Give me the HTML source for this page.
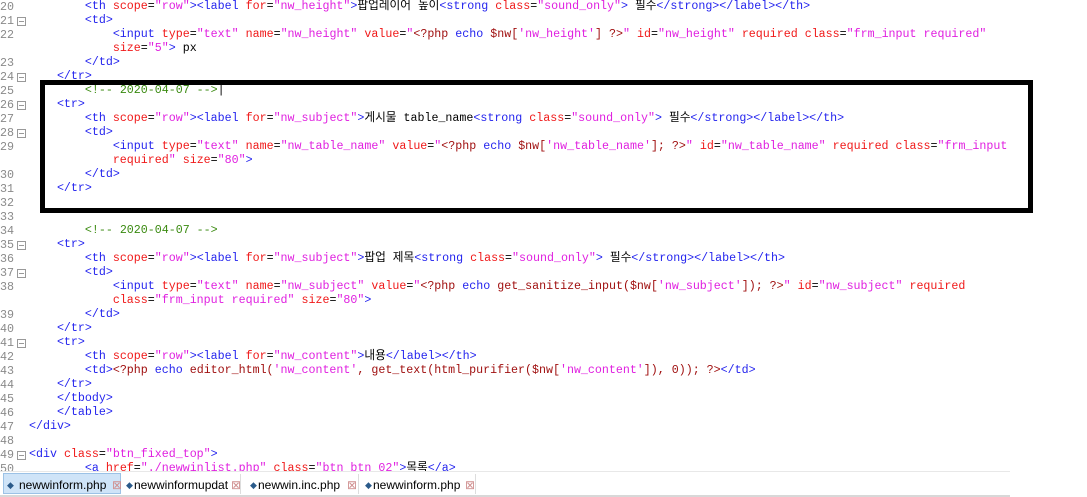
<!DOCTYPE html>
<html><head><meta charset="utf-8"><style>
body{margin:0;width:1087px;height:497px;overflow:hidden;background:#fff;position:relative;font-family:"Liberation Mono","Noto Sans CJK KR",monospace;}
.ln{position:absolute;left:0;width:14px;text-align:right;font-size:11.7px;color:#8a8a8a;line-height:14px}
.fold{position:absolute;left:17px;width:7px;height:7px;border:1px solid #999;}
.fold:after{content:"";position:absolute;left:1px;right:1px;top:3px;height:1px;background:#999}
.code{position:absolute;left:29px;top:0;font-size:11.65px;line-height:14px;white-space:pre;color:#000}
.t{color:#2424ee}.a{color:#f01818}.v{color:#e020e0}.c{color:#3a8a10}.p{color:#a01010}.k{color:#2424ee}
.box{position:absolute;left:40px;top:80px;width:983px;height:123px;border:5px solid #000}
.tabs{position:absolute;left:0;top:471px;width:1010px;height:24px;border-top:1px solid #e8e8e8;background:#fff;font-family:"Liberation Sans",sans-serif;font-size:12px}
.bot{position:absolute;left:0;top:495px;width:1010px;height:2px;background:#d8d8d8}
.tab{position:absolute;top:2px;height:20px;line-height:22px;color:#000;white-space:nowrap}
.x{position:absolute;top:0;color:#d09090;font-size:12px}
.dia{position:absolute;top:0;color:#2a5a8a;font-size:9px}
.sep{position:absolute;top:2px;width:1px;height:20px;background:#ddd}
</style></head><body>
<div class="box"></div>
<div class="code"><span class="t">        &lt;th </span><span class="a">scope</span>=<span class="v">"row"</span><span class="t">&gt;&lt;label </span><span class="a">for</span>=<span class="v">"nw_height"</span><span class="t">&gt;</span>팝업레이어 높이<span class="t">&lt;strong </span><span class="a">class</span>=<span class="v">"sound_only"</span><span class="t">&gt;</span> 필수<span class="t">&lt;/strong&gt;&lt;/label&gt;&lt;/th&gt;</span>
<span class="t">        &lt;td&gt;</span>
<span class="t">            &lt;input </span><span class="a">type</span>=<span class="v">"text"</span> <span class="a">name</span>=<span class="v">"nw_height"</span> <span class="a">value</span>=<span class="v">"</span><span class="p">&lt;?php</span> <span class="k">echo</span> <span class="p">$nw[</span><span class="v">'nw_height'</span><span class="p">] ?&gt;</span><span class="v">"</span> <span class="a">id</span>=<span class="v">"nw_height"</span> <span class="a">required</span> <span class="a">class</span>=<span class="v">"frm_input required"</span>
            <span class="a">size</span>=<span class="v">"5"</span><span class="t">&gt;</span> px
<span class="t">        &lt;/td&gt;</span>
<span class="t">    &lt;/tr&gt;</span>
        <span class="c">&lt;!-- 2020-04-07 --&gt;</span>|
<span class="t">    &lt;tr&gt;</span>
<span class="t">        &lt;th </span><span class="a">scope</span>=<span class="v">"row"</span><span class="t">&gt;&lt;label </span><span class="a">for</span>=<span class="v">"nw_subject"</span><span class="t">&gt;</span>게시물 table_name<span class="t">&lt;strong </span><span class="a">class</span>=<span class="v">"sound_only"</span><span class="t">&gt;</span> 필수<span class="t">&lt;/strong&gt;&lt;/label&gt;&lt;/th&gt;</span>
<span class="t">        &lt;td&gt;</span>
<span class="t">            &lt;input </span><span class="a">type</span>=<span class="v">"text"</span> <span class="a">name</span>=<span class="v">"nw_table_name"</span> <span class="a">value</span>=<span class="v">"</span><span class="p">&lt;?php</span> <span class="k">echo</span> <span class="p">$nw[</span><span class="v">'nw_table_name'</span><span class="p">]; ?&gt;</span><span class="v">"</span> <span class="a">id</span>=<span class="v">"nw_table_name"</span> <span class="a">required</span> <span class="a">class</span>=<span class="v">"frm_input</span>
<span class="a">            required</span><span class="v">"</span> <span class="a">size</span>=<span class="v">"80"</span><span class="t">&gt;</span>
<span class="t">        &lt;/td&gt;</span>
<span class="t">    &lt;/tr&gt;</span>


        <span class="c">&lt;!-- 2020-04-07 --&gt;</span>
<span class="t">    &lt;tr&gt;</span>
<span class="t">        &lt;th </span><span class="a">scope</span>=<span class="v">"row"</span><span class="t">&gt;&lt;label </span><span class="a">for</span>=<span class="v">"nw_subject"</span><span class="t">&gt;</span>팝업 제목<span class="t">&lt;strong </span><span class="a">class</span>=<span class="v">"sound_only"</span><span class="t">&gt;</span> 필수<span class="t">&lt;/strong&gt;&lt;/label&gt;&lt;/th&gt;</span>
<span class="t">        &lt;td&gt;</span>
<span class="t">            &lt;input </span><span class="a">type</span>=<span class="v">"text"</span> <span class="a">name</span>=<span class="v">"nw_subject"</span> <span class="a">value</span>=<span class="v">"</span><span class="p">&lt;?php</span> <span class="k">echo</span> <span class="p">get_sanitize_input($nw[</span><span class="v">'nw_subject'</span><span class="p">]); ?&gt;</span><span class="v">"</span> <span class="a">id</span>=<span class="v">"nw_subject"</span> <span class="a">required</span>
            <span class="a">class</span>=<span class="v">"frm_input required"</span> <span class="a">size</span>=<span class="v">"80"</span><span class="t">&gt;</span>
<span class="t">        &lt;/td&gt;</span>
<span class="t">    &lt;/tr&gt;</span>
<span class="t">    &lt;tr&gt;</span>
<span class="t">        &lt;th </span><span class="a">scope</span>=<span class="v">"row"</span><span class="t">&gt;&lt;label </span><span class="a">for</span>=<span class="v">"nw_content"</span><span class="t">&gt;</span>내용<span class="t">&lt;/label&gt;&lt;/th&gt;</span>
<span class="t">        &lt;td&gt;</span><span class="p">&lt;?php</span> <span class="k">echo</span> <span class="p">editor_html(</span><span class="v">'nw_content'</span><span class="p">, get_text(html_purifier($nw[</span><span class="v">'nw_content'</span><span class="p">]), 0)); ?&gt;</span><span class="t">&lt;/td&gt;</span>
<span class="t">    &lt;/tr&gt;</span>
<span class="t">    &lt;/tbody&gt;</span>
<span class="t">    &lt;/table&gt;</span>
<span class="t">&lt;/div&gt;</span>

<span class="t">&lt;div </span><span class="a">class</span>=<span class="v">"btn_fixed_top"</span><span class="t">&gt;</span>
<span class="t">        &lt;a </span><span class="a">href</span>=<span class="v">"./newwinlist.php"</span> <span class="a">class</span>=<span class="v">"btn btn_02"</span><span class="t">&gt;</span>목록<span class="t">&lt;/a&gt;</span></div>
<div class="ln" style="top:0">20</div><div class="ln" style="top:14px">21</div><div class="ln" style="top:28px">22</div><div class="ln" style="top:56px">23</div><div class="ln" style="top:70px">24</div><div class="ln" style="top:84px">25</div><div class="ln" style="top:98px">26</div><div class="ln" style="top:112px">27</div><div class="ln" style="top:126px">28</div><div class="ln" style="top:140px">29</div><div class="ln" style="top:168px">30</div><div class="ln" style="top:182px">31</div><div class="ln" style="top:196px">32</div><div class="ln" style="top:210px">33</div><div class="ln" style="top:224px">34</div><div class="ln" style="top:238px">35</div><div class="ln" style="top:252px">36</div><div class="ln" style="top:266px">37</div><div class="ln" style="top:280px">38</div><div class="ln" style="top:308px">39</div><div class="ln" style="top:322px">40</div><div class="ln" style="top:336px">41</div><div class="ln" style="top:350px">42</div><div class="ln" style="top:364px">43</div><div class="ln" style="top:378px">44</div><div class="ln" style="top:392px">45</div><div class="ln" style="top:406px">46</div><div class="ln" style="top:420px">47</div><div class="ln" style="top:434px">48</div><div class="ln" style="top:448px">49</div><div class="ln" style="top:462px">50</div>
<div class="fold" style="top:17px"></div><div class="fold" style="top:73px"></div><div class="fold" style="top:101px"></div><div class="fold" style="top:129px"></div><div class="fold" style="top:241px"></div><div class="fold" style="top:269px"></div><div class="fold" style="top:339px"></div><div class="fold" style="top:451px"></div>
<div class="tabs">
<div class="tab" style="left:3px;width:118px;background:#cfe4f8;border:1px solid #9cc2e6;top:1px;box-sizing:border-box;height:21px"></div>
<span class="dia" style="left:7px;top:8px">◆</span><div class="tab" style="left:19px">newwinform.php</div><span class="x" style="left:112px;top:6px">⊠</span>
<span class="dia" style="left:126px;top:8px">◆</span><div class="tab" style="left:134px">newwinformupdat</div><span class="x" style="left:231px;top:6px">⊠</span>
<div class="sep" style="left:240px"></div>
<span class="dia" style="left:250px;top:8px">◆</span><div class="tab" style="left:258px">newwin.inc.php</div><span class="x" style="left:347px;top:6px">⊠</span>
<div class="sep" style="left:358px"></div>
<span class="dia" style="left:365px;top:8px">◆</span><div class="tab" style="left:373px">newwinform.php</div><span class="x" style="left:465px;top:6px">⊠</span>
<div class="sep" style="left:475px"></div>
</div>
<div class="bot"></div>
</body></html>
